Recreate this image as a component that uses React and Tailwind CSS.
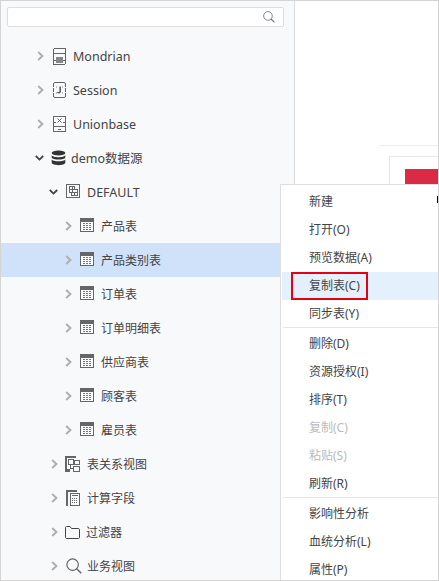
import React from "react";

const S = { stroke: "#666", fill: "none" };

function Mondrian() {
  return (
    <svg width="13" height="17" viewBox="0 0 13 17" shapeRendering="crispEdges">
      <rect x="0.5" y="0.5" width="12" height="16" rx="1.5" {...S} />
      <path d="M0 5.5H13M0 12.5H3M10 12.5H13" {...S} />
      <rect x="3" y="9" width="7" height="6" fill="#888" />
    </svg>
  );
}
function SessionIcon() {
  return (
    <svg width="13" height="16" viewBox="0 0 13 16">
      <rect x="0.5" y="0.5" width="12" height="15" rx="1.5" {...S} />
      <path d="M0 5.5H2M11 5.5H13M0 10.5H2M11 10.5H13" stroke="#f8f9fb" fill="none" />
      <path d="M3 5H4M9 5H10M3 11H4M9 11H10" stroke="#888" fill="none" />
      <path d="M7.2 4.5V9.5C7.2 11 5 11 4.5 10" stroke="#555" strokeWidth="1.5" fill="none" />
    </svg>
  );
}
function Union() {
  return (
    <svg width="13" height="16" viewBox="0 0 13 16" shapeRendering="crispEdges">
      <rect x="0.5" y="0.5" width="12" height="15" {...S} />
      <path d="M0 6.5H3M10 6.5H13M0 10.5H13M5 13.5H8" {...S} />
      <path d="M4.5 2.5L8.5 6.5M8.5 2.5L4.5 6.5" stroke="#666" fill="none" shapeRendering="auto" />
    </svg>
  );
}
function Db() {
  return (
    <svg width="15" height="16" viewBox="0 0 15 16">
      <ellipse cx="7.5" cy="3" rx="6.8" ry="2.6" fill="#333" />
      <path d="M0.7 5C1.5 8 13.5 8 14.3 5V7.4C13.5 10.2 1.5 10.2 0.7 7.4Z" fill="#333" />
      <path d="M0.7 9.2C1.5 12 13.5 12 14.3 9.2V12.8C13.5 16 1.5 16 0.7 12.8Z" fill="#333" />
    </svg>
  );
}
function Schema() {
  return (
    <svg width="14" height="14" viewBox="0 0 14 14" shapeRendering="crispEdges" className="relative -top-px">
      <rect x="0.5" y="0.5" width="13" height="13" stroke="#666" fill="none" />
      <path d="M3.5 2.5H8.5V5.5H11.5V11.5H5.5V8.5H3.5ZM3.5 5.5H8.5M3.5 8.5H8.5V11.5M6 2.5V8.5M8.5 8.5H11.5" stroke="#666" fill="none" />
    </svg>
  );
}
function TableIcon() {
  return (
    <svg width="14" height="14" viewBox="0 0 14 14" shapeRendering="crispEdges" className="relative -top-px">
      <rect x="0" y="0" width="14" height="14" fill="#666" />
      <rect x="1" y="4" width="12" height="9" fill="#fbfcfe" />
      <path d="M3 5.5H12M3 7.5H12M3 9.5H12M3 11.5H12" stroke="#777" fill="none" strokeDasharray="2 1" />
    </svg>
  );
}
function Relation() {
  return (
    <svg width="15" height="16" viewBox="0 0 15 16" shapeRendering="crispEdges">
      <path d="M0 0H11V2H2V13H5V16H0Z" fill="#666" />
      <rect x="3.5" y="3.5" width="5" height="5" {...S} />
      <rect x="9.5" y="4.5" width="5" height="4" {...S} />
      <rect x="8.5" y="10.5" width="6" height="5" {...S} />
      <path d="M5.5 8.5V12.5H8.5" {...S} />
    </svg>
  );
}
function Calc() {
  return (
    <svg width="14" height="16" viewBox="0 0 14 16" shapeRendering="crispEdges">
      <path d="M0 0H11V2H2V16H0Z" fill="#666" />
      <rect x="4.5" y="3.5" width="9" height="12" {...S} />
      <path d="M6 5.5H12" stroke="#666" fill="none" />
      <path d="M6 8.5H12M6 10.5H12M6 12.5H12" stroke="#666" fill="none" strokeDasharray="1 1" />
    </svg>
  );
}
function Folder() {
  return (
    <svg width="15" height="13" viewBox="0 0 15 13">
      <path d="M0.5 1.5C0.5 1 1 0.5 1.5 0.5H5L6.5 2.5H13.5C14 2.5 14.5 3 14.5 3.5V11.5C14.5 12 14 12.5 13.5 12.5H1.5C1 12.5 0.5 12 0.5 11.5Z" stroke="#444" fill="none" />
    </svg>
  );
}
function Search({ size = 15, color = "#666" }) {
  return (
    <svg width={size} height={size} viewBox="0 0 15 15">
      <circle cx="6.2" cy="6.2" r="5.4" stroke={color} strokeWidth="1.1" fill="none" />
      <path d="M10 10L14.3 14.3" stroke={color} strokeWidth="1.4" fill="none" />
    </svg>
  );
}
function ChevR() {
  return (
    <svg width="7" height="10" viewBox="0 0 7 10">
      <path d="M1.2 1L5.4 5L1.2 9" stroke="#b0b0b0" strokeWidth="2" fill="none" />
    </svg>
  );
}
function ChevD() {
  return (
    <svg width="9" height="6" viewBox="0 0 9 6">
      <path d="M0.8 1L4.5 4.6L8.2 1" stroke="#444" strokeWidth="1.8" fill="none" />
    </svg>
  );
}

function Row({ pad, chev, open, icon, iconW, label, selected, labelCls = "" }) {
  return (
    <div className={`flex h-[34px] shrink-0 items-center text-[#444] ${pad} ${selected ? "bg-[#cfe2f9]" : ""}`}>
      <span className={`flex shrink-0 items-center ${chev}`}>{open ? <ChevD /> : <ChevR />}</span>
      <span className={`flex shrink-0 items-center ${iconW}`}>{icon}</span>
      <span className={`relative top-px ${labelCls}`}>{label}</span>
    </div>
  );
}

const menu = [
  ["新建"], ["打开(O)"], ["预览数据(A)"], ["复制表(C)", "hot"], ["同步表(Y)"], null,
  ["删除(D)"], ["资源授权(I)"], ["排序(T)"], ["复制(C)", "off"], ["粘贴(S)", "off"], ["刷新(R)"], null,
  ["影响性分析"], ["血统分析(L)"], ["属性(P)"],
];

const tables = ["产品表", "产品类别表", "订单表", "订单明细表", "供应商表", "顾客表", "雇员表"];

export default function App() {
  return (
    <div
      className="relative flex h-[581px] w-[439px] overflow-hidden border border-[#d4d4d4] bg-white text-[12px]"
      style={{ fontFamily: '"Noto Sans", "Noto Sans CJK SC", sans-serif' }}
    >
      <aside className="flex h-full w-[294px] shrink-0 flex-col border-r border-[#dcdcdc] bg-[#f8f9fb]">
        <div className="mx-[6px] mt-[6px] flex h-[20px] w-[277px] shrink-0 items-center justify-end rounded-[2px] border border-[#dddddd] bg-white pr-[8px]">
          <Search size={12} color="#777" />
        </div>
        <div className="mt-[12px] flex shrink-0 flex-col">
          <Row pad="pl-[36px]" chev="w-[16px]" icon={<Mondrian />} iconW="w-[20px]" label="Mondrian" labelCls="text-[12.5px]" />
          <Row pad="pl-[36px]" chev="w-[16px]" icon={<SessionIcon />} iconW="w-[20px]" label="Session" labelCls="text-[12.5px]" />
          <Row pad="pl-[36px]" chev="w-[16px]" icon={<Union />} iconW="w-[20px]" label="Unionbase" labelCls="text-[12.5px]" />
          <Row pad="pl-[34px]" chev="w-[16px]" open icon={<Db />} iconW="w-[20px]" label="demo数据源" labelCls="text-[12.5px]" />
          <Row pad="pl-[48px]" chev="w-[17px]" open icon={<Schema />} iconW="w-[21px]" label="DEFAULT" labelCls="text-[12.5px]" />
          {tables.map((t, i) => (
            <Row key={t} pad="pl-[64px]" chev="w-[15px]" selected={i === 1} icon={<TableIcon />} iconW="w-[21px]" label={t} />
          ))}
          <Row pad="pl-[50px]" chev="w-[14px]" icon={<Relation />} iconW="w-[22px]" label="表关系视图" />
          <Row pad="pl-[50px]" chev="w-[15px]" icon={<Calc />} iconW="w-[21px]" label="计算字段" />
          <Row pad="pl-[50px]" chev="w-[14px]" icon={<Folder />} iconW="w-[21px]" label="过滤器" />
          <Row pad="pl-[50px]" chev="w-[15px]" icon={<Search size={16} />} iconW="w-[21px]" label="业务视图" />
        </div>
      </aside>

      <main className="flex min-w-0 flex-1 flex-col items-end pt-[144px]">
        <div className="h-px w-[59px] bg-[#eeeeee]" />
        <div className="mt-[10px] h-[60px] w-[49px] border-l border-t border-[#e8e8e8] pl-[15px] pt-[12px]">
          <div className="h-[40px] w-full bg-[#d92b45]" />
        </div>
      </main>

      <div className="absolute bottom-0 right-0 top-[183px] w-[158px] border-l border-t border-[#dedede] bg-white pl-px pt-[3px] text-[#444]">
        {menu.map((m, i) =>
          m === null ? (
            <div key={i} className="relative -top-px ml-px h-[2px] border-t border-[#e6e6e6]" />
          ) : (
            <div
              key={i}
              className={`relative flex h-[28px] items-center pl-[27px] ${m[1] === "hot" ? "bg-[#e4f0fc]" : ""} ${m[1] === "off" ? "text-[#bbbbbb]" : ""}`}
            >
              {m[1] === "hot" && <span className="absolute left-[9px] top-0 h-[28px] w-[77px] border-2 border-[#e60012]" />}
              <span className="relative">{m[0]}</span>
            </div>
          )
        )}
        <span className="absolute right-0 top-[11px] h-[7px] w-px bg-black" />
      </div>
    </div>
  );
}
